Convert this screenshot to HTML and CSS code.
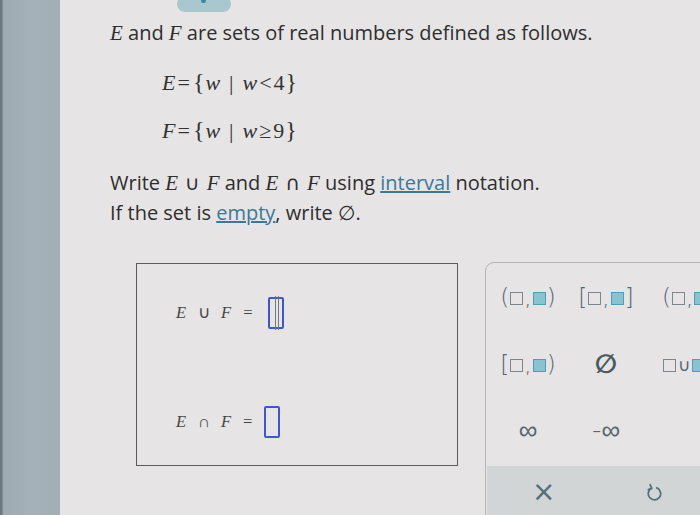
FILE: index.html
```html
<!DOCTYPE html>
<html>
<head>
<meta charset="utf-8">
<link rel="stylesheet" href="styles.css">
</head>
<body>
<div class="page">
  <div class="strip"></div>
  <div class="main">
    <div class="tab"><span class="tab-dot"></span></div>
    <div class="content">
      <p class="intro"><i class="mv">E</i> and <i class="mv">F</i> are sets of real numbers defined as follows.</p>
      <div class="defs">
        <div class="def"><i>E</i><span class="eq">=</span><span class="br">{</span><i>w</i><span class="bar">|</span><i>w</i><span class="rel">&lt;</span>4<span class="br">}</span></div>
        <div class="def"><i>F</i><span class="eq">=</span><span class="br">{</span><i>w</i><span class="bar">|</span><i>w</i><span class="rel">≥</span>9<span class="br">}</span></div>
      </div>
      <div class="instrs">
        <p class="instr">Write <i class="mv">E</i><span class="so">∪</span><i class="mv">F</i> and <i class="mv">E</i><span class="so">∩</span><i class="mv">F</i> using <a class="lnk">interval</a> notation.</p>
        <p class="instr">If the set is <a class="lnk">empty</a>, write ∅.</p>
      </div>
    </div>
    <div class="work">
      <div class="answers">
        <div class="ans">
          <i>E</i><span class="op">∪</span><i>F</i><span class="op eqs">=</span><span class="slot active"><span class="caret"></span></span>
        </div>
        <div class="ans">
          <i>E</i><span class="op">∩</span><i>F</i><span class="op eqs">=</span><span class="slot"></span>
        </div>
      </div>
      <div class="pad">
        <div class="keys">
          <div class="key">(<span class="sq"></span>,<span class="sq on"></span>)</div>
          <div class="key">[<span class="sq"></span>,<span class="sq on"></span>]</div>
          <div class="key">(<span class="sq"></span>,<span class="sq on"></span>]</div>
          <div class="key">[<span class="sq"></span>,<span class="sq on"></span>)</div>
          <div class="key empty">∅</div>
          <div class="key">
            <span class="sq"></span><span class="cup">∪</span><span class="sq on"></span>
          </div>
          <div class="key inf">∞</div>
          <div class="key inf">-∞</div>
        </div>
        <div class="actions">
          <span class="act x">×</span>
          <span class="act undo">
            <svg width="16" height="20" viewBox="0 0 16 20"><path d="M5.5 5.2 A6.2 6.2 0 1 0 10.8 4.9" fill="none" stroke="#56707a" stroke-width="1.8" stroke-linecap="round"/><path d="M4.2 1.8 L5.7 5.3 L2.4 6.6" fill="none" stroke="#56707a" stroke-width="1.8" stroke-linecap="round" stroke-linejoin="round"/></svg>
          </span>
        </div>
      </div>
    </div>
  </div>
</div>
</body>
</html>
```

FILE: styles.css
```css
html, body {
  margin: 0;
  padding: 0;
}
body {
  width: 700px;
  height: 515px;
  overflow: hidden;
  font-family: "Open Sans", "DejaVu Sans", sans-serif;
  color: #2e2e2e;
}
.page {
  display: flex;
  width: 700px;
  height: 515px;
  overflow: hidden;
}
.strip {
  width: 60px;
  flex: none;
  background: linear-gradient(to right, #6b7780 0, #6b7780 2px, #9ba9b1 3px, #a4b1b8 30px, #a2b0b6 60px);
}
.main {
  flex: 1;
  position: relative;
  background: #e6e4e5;
  overflow: hidden;
}
.tab {
  position: absolute;
  left: 117px;
  top: -4px;
  width: 54px;
  height: 16px;
  border-radius: 9px;
  background: #a8c7cf;
}
.tab-dot {
  position: absolute;
  left: 24px;
  top: 3px;
  width: 5px;
  height: 4px;
  border-radius: 3px;
  background: #3e8aa0;
}
.content {
  padding: 19px 0 0 50px;
}
.intro {
  margin: 0;
  font-size: 20px;
  line-height: 28px;
}
.mv {
  font-family: "Liberation Serif", serif;
  font-size: 21px;
}
.so {
  margin: 0 7px;
}
.defs {
  margin: 21px 0 0 52px;
  font-family: "Liberation Serif", serif;
  font-size: 22px;
  color: #333;
}
.def {
  height: 48px;
  line-height: 28px;
}
.eq { margin: 0 2px; }
.br { font-size: 24px; margin: 0 1px; }
.bar { margin: 0 9px; }
.rel { margin: 0 2px; }
.instrs {
  padding-top: 4px;
}
.instr {
  margin: 0;
  font-size: 20px;
  line-height: 30px;
}
.lnk {
  color: #3d7894;
  text-decoration: underline;
  text-decoration-color: #3d7894;
}
.work {
  display: flex;
  margin-top: 35px;
  padding-left: 76px;
  gap: 27px;
}
.answers {
  width: 322px;
  height: 203px;
  flex: none;
  border: 1px solid #5a5a5a;
  padding: 33px 0 0 39px;
  box-sizing: border-box;
  font-family: "Liberation Serif", serif;
  font-size: 16.5px;
  color: #444;
}
.ans {
  display: flex;
  align-items: center;
  height: 32px;
}
.ans + .ans {
  margin-top: 77px;
}
.op {
  margin: 0 11px 0 12px;
  font-style: normal;
}
.eqs { margin: 0 12px 0 12px; }
.slot {
  width: 12px;
  height: 28px;
  border: 2px solid #3b57d4;
  border-radius: 2px;
  position: relative;
}
.slot.active { margin-left: 3px; }
.caret {
  position: absolute;
  left: 5px;
  top: -3px;
  width: 2px;
  height: 34px;
  border-left: 1px solid #6d7a86;
  border-right: 1px solid #6d7a86;
}
.pad {
  width: 260px;
  height: 260px;
  flex: none;
  border: 1px solid #b4b6b6;
  border-radius: 9px 0 0 0;
  display: flex;
  flex-direction: column;
  margin-top: -1px;
}
.keys {
  display: grid;
  grid-template-columns: 78px 78px 78px;
  grid-template-rows: 66px 68px 64px;
  padding: 1px 0 0 3px;
  height: 203px;
  box-sizing: border-box;
  align-items: center;
}
.key {
  display: flex;
  align-items: center;
  justify-content: center;
  font-size: 23px;
  color: #55666c;
  font-family: "DejaVu Sans", sans-serif;
  font-weight: 300;
  white-space: nowrap;
}
.key:nth-child(3), .key:nth-child(6) {
  justify-content: flex-start;
  padding-left: 17px;
}
.sq {
  display: inline-block;
  width: 11px;
  height: 11px;
  border: 1.5px solid #7b878b;
  margin: 3px 1px 0;
}
.sq.on {
  background: #88c3cf;
  border-color: #4f9fb3;
}
.cup {
  font-size: 17px;
  margin: 2px 1px 0;
}
.empty {
  font-size: 26px;
  font-weight: bold;
  color: #4a5a5f;
}
.inf {
  font-size: 26px;
}
.actions {
  flex: 1;
  background: #d2d5d5;
  margin: 0 0 0 1px;
  display: flex;
  align-items: flex-start;
  padding: 16px 0 0 45px;
  gap: 91px;
}
.act {
  color: #56707a;
  font-size: 28px;
  line-height: 20px;
  font-family: "DejaVu Sans", sans-serif;
}
.undo svg { display: block; margin-top: 1px; }
```
